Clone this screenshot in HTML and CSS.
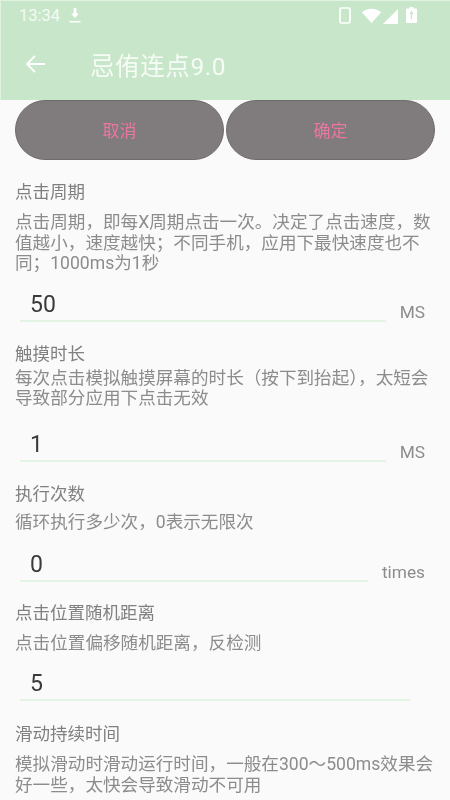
FILE: index.html
```html
<!DOCTYPE html>
<html lang="zh-CN">
<head>
<meta charset="utf-8">
<title>忌侑连点9.0</title>
<link rel="stylesheet" href="styles.css">
</head>
<body>
<div class="app">
  <header class="appbar">
    <div class="status">
      <span class="time">13:34</span>
      <svg class="ic-dl" width="12" height="16" viewBox="0 0 12 16"><path d="M4.6 0h2.8v5.5H10L6 10 2 5.500h2.600zM0.500 13h11v1.600H.5z" fill="#fff"/></svg>
      <span class="spacer"></span>
      <svg class="ic-phone" width="12" height="17" viewBox="0 0 12 17"><rect x="1" y="1" width="10" height="15" rx="1.500" fill="none" stroke="#fff" stroke-width="1.700"/></svg>
      <svg class="ic-wifi" width="19" height="15" viewBox="0 0 19 15"><path d="M0 4.500C5 -.5 14 -.5 19 4.500L9.500 15z" fill="#fff"/></svg>
      <svg class="ic-sig" width="15" height="15" viewBox="0 0 15 15"><path d="M15 0v15H0z" fill="#fff"/></svg>
      <svg class="ic-bat" width="11" height="16" viewBox="0 0 11 16"><path fill-rule="evenodd" d="M3.500 0h4v1.500H10a1 1 0 0 1 1 1V15a1 1 0 0 1-1 1H1a1 1 0 0 1-1-1V2.500a1 1 0 0 1 1-1h2.500zM5.500 3.500L3.500 7h1.300v5h1.400V7h1.300z" fill="#fff"/></svg>
    </div>
    <div class="toolbar">
      <svg class="back" width="21" height="20" viewBox="0 0 22 20"><path d="M21 10H2.500M10.500 1.500L2 10l8.500 8.500" fill="none" stroke="#fff" stroke-width="2"/></svg>
      <span class="apptitle">忌侑连点9.0</span>
    </div>
  </header>
  <main class="content">
    <div class="actions">
      <button class="pill">取消</button>
      <button class="pill">确定</button>
    </div>

    <section class="setting s1">
      <h2 class="name">点击周期</h2>
      <p class="desc">点击周期，即每X周期点击一次。决定了点击速度，数值越小，速度越快；不同手机，应用下最快速度也不同；1000ms为1秒</p>
      <div class="row"><div class="field">50</div><span class="unit">MS</span></div>
    </section>

    <section class="setting s2">
      <h2 class="name">触摸时长</h2>
      <p class="desc">每次点击模拟触摸屏幕的时长（按下到抬起），太短会导致部分应用下点击无效</p>
      <div class="row"><div class="field">1</div><span class="unit">MS</span></div>
    </section>

    <section class="setting s3">
      <h2 class="name">执行次数</h2>
      <p class="desc">循环执行多少次，0表示无限次</p>
      <div class="row"><div class="field">0</div><span class="unit">times</span></div>
    </section>

    <section class="setting s4">
      <h2 class="name">点击位置随机距离</h2>
      <p class="desc">点击位置偏移随机距离，反检测</p>
      <div class="row nounit"><div class="field">5</div></div>
    </section>

    <section class="setting s5">
      <h2 class="name">滑动持续时间</h2>
      <p class="desc">模拟滑动时滑动运行时间，一般在300～500ms效果会好一些，太快会导致滑动不可用</p>
    </section>
  </main>
</div>
</body>
</html>
```
FILE: styles.css
```css
* { box-sizing: border-box; }
html, body { margin: 0; padding: 0; }
body {
  width: 450px;
  height: 800px;
  overflow: hidden;
  background: #fafafa;
  font-family: Roboto, "Noto Sans CJK SC", sans-serif;
}
.app { width: 450px; height: 800px; overflow: hidden; filter: blur(.35px); }
.appbar {
  height: 100px;
  background: #c8e6c9;
  color: #fff;
  border-top: 1px solid #e0f2e0;
  border-left: 1px solid #e0f2e0;
}
.status {
  height: 27px;
  display: flex;
  align-items: center;
  padding: 2px 33px 0 18px;
}
.time { font-size: 16.500px; color: #f4fbf4; }
.ic-dl { margin-left: 9px; margin-top: 1px; }
.spacer { flex: 1; }
.ic-phone { margin-right: 11px; }
.ic-wifi { margin-right: 2px; }
.ic-sig { margin-right: 8px; margin-top: 1px; }
.ic-bat { margin-top: -2px; }
.toolbar {
  height: 72px;
  display: flex;
  align-items: center;
  padding: 0 0 0 24px;
}
.apptitle {
  margin-left: 44px;
  font-size: 24.500px;
  letter-spacing: .6px;
  color: #f6fbf6;
}
.back { flex: none; }
.content { padding: 0 15px; }
.actions { display: flex; gap: 2px; height: 60px; }
.pill {
  flex: 1;
  height: 60px;
  border: 1px solid #6f6b6c;
  border-radius: 30px;
  background: #807b7c;
  color: #ea76a2;
  font-family: inherit;
  font-size: 17px;
  font-weight: 400;
  padding: 0 0 2px;
}
.name {
  margin: 0;
  font-size: 17.500px;
  font-weight: 400;
  line-height: 22px;
  color: #808080;
}
.desc {
  margin: 8px 0 0;
  font-size: 17.600px;
  line-height: 20.600px;
  color: #8c8c8c;
}
.row {
  display: flex;
  align-items: flex-end;
  margin: 0 10px 0 5px;
}
.field {
  flex: 1;
  height: 32px;
  line-height: 30px;
  padding-left: 10px;
  font-size: 23px;
  color: #3a3a3a;
  border-bottom: 2px solid #e3f3e4;
}
.unit {
  margin-left: 14px;
  font-size: 17.300px;
  line-height: 20px;
  color: #8c8c8c;
}
.nounit { margin-right: 25px; }
.s1 { margin-top: 21px; }
.s1 .desc { margin-top: 9px; }
.s1 .row { margin-top: 16px; }
.s2 { margin-top: 21px; }
.s2 .desc { margin-top: 3px; }
.s2 .row { margin-top: 21px; }
.s3 { margin-top: 21px; }
.s3 .desc { margin-top: 7px; }
.s3 .row { margin-top: 17px; }
.s4 { margin-top: 20px; }
.s4 .desc { margin-top: 9px; }
.s4 .row { margin-top: 16px; }
.s5 { margin-top: 22px; }
.s5 .desc { margin-top: 9px; }
```
